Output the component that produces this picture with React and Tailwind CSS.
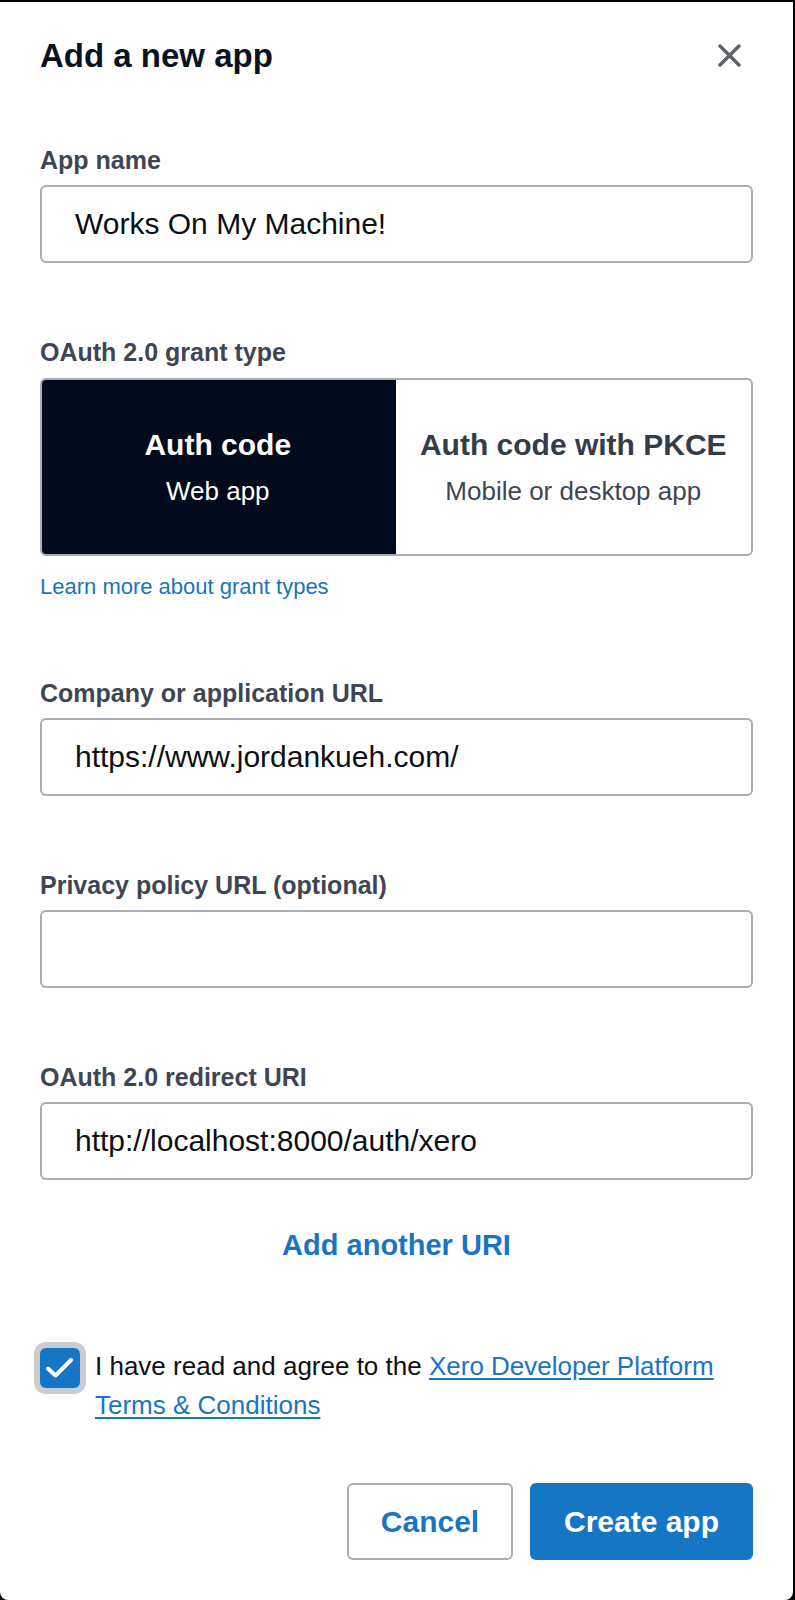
import React from 'react';

const fields = [
    { label: 'Company or application URL', value: 'https://www.jordankueh.com/' },
    { label: 'Privacy policy URL (optional)', value: '' },
    { label: 'OAuth 2.0 redirect URI', value: 'http://localhost:8000/auth/xero' },
];

function Field({ label, value, className = '' }) {
    return (
        <div className={className}>
            <label className="block text-[25px] leading-none font-bold text-[#3e4654]">{label}</label>
            <div className="mt-[12px] h-[78px] border-2 border-[#a9aeb5] rounded-[6px] flex items-center px-[33px] text-[30px] leading-none text-[#0d0f12]">
                {value}
            </div>
        </div>
    );
}

export default function App() {
    return (
        <div className="min-h-[1600px] bg-black pt-[2px] pr-[2px]">
            <div className="h-[1598px] bg-white rounded-b-[8px] px-[40px] pt-[37px] font-['Liberation_Sans',Arial,sans-serif]">

                {/* Header */}
                <div className="flex items-start justify-between">
                    <h2 className="text-[33px] leading-none font-bold text-[#0b1221]">Add a new app</h2>
                    <button className="mt-[5px] mr-[12px] text-[#59616d]" aria-label="Close">
                        <svg width="23" height="23" viewBox="0 0 23 23" fill="none" stroke="currentColor" strokeWidth="3.4" strokeLinecap="round">
                            <path d="M2 2L21 21M21 2L2 21" />
                        </svg>
                    </button>
                </div>

                <Field label="App name" value="Works On My Machine!" className="mt-[76px]" />

                {/* Grant type */}
                <div className="mt-[77px]">
                    <div className="text-[25px] leading-none font-bold text-[#3e4654]">OAuth 2.0 grant type</div>
                    <div className="mt-[13px] h-[178px] flex border-2 border-[#a9aeb5] rounded-[6px] overflow-hidden">
                        <div className="flex-1 bg-[#020b1c] flex flex-col items-center justify-center -m-[2px] mr-0 rounded-l-[6px]">
                            <div className="text-[30px] leading-none font-bold text-white">Auth code</div>
                            <div className="mt-[18px] text-[26px] leading-none text-white">Web app</div>
                        </div>
                        <div className="flex-1 flex flex-col items-center justify-center">
                            <div className="text-[30px] leading-none font-bold text-[#343c49]">Auth code with PKCE</div>
                            <div className="mt-[18px] text-[26px] leading-none text-[#3e4654]">Mobile or desktop app</div>
                        </div>
                    </div>
                    <a className="block mt-[20px] text-[22px] leading-none text-[#1a74c4]">Learn more about grant types</a>
                </div>

                <Field label={fields[0].label} value={fields[0].value} className="mt-[83px]" />
                <Field label={fields[1].label} value={fields[1].value} className="mt-[77px]" />
                <Field label={fields[2].label} value={fields[2].value} className="mt-[77px]" />

                <div className="mt-[51px] text-center text-[29px] leading-none font-bold text-[#1a74c4]">Add another URI</div>

                {/* Terms */}
                <div className="mt-[87px] flex items-start">
                    <div className="mt-[1px] shrink-0 w-[40px] h-[40px] rounded-[6px] bg-[#1676c6] ring-[6px] ring-[#c9ccd1] flex items-center justify-center">
                        <svg width="30" height="24" viewBox="0 0 30 24" fill="none" stroke="white" strokeWidth="4" strokeLinecap="round" strokeLinejoin="round">
                            <path d="M3 12.5L10.5 19.5L26 4" />
                        </svg>
                    </div>
                    <div className="ml-[15px] text-[26px] leading-[39px] text-[#0d0f12]">
                        <div>
                            I have read and agree to the{' '}
                            <a className="text-[#1a74c4] underline underline-offset-[3px]">Xero Developer Platform</a>
                        </div>
                        <a className="text-[#1a74c4] underline underline-offset-[3px]">Terms &amp; Conditions</a>
                    </div>
                </div>

                {/* Actions */}
                <div className="mt-[58px] flex justify-end gap-[17px]">
                    <button className="h-[77px] w-[166px] border-2 border-[#a9aeb5] rounded-[6px] text-[30px] font-bold text-[#1a74c4]">Cancel</button>
                    <button className="h-[77px] w-[223px] rounded-[6px] bg-[#1676c6] text-[30px] font-bold text-white">Create app</button>
                </div>
            </div>
        </div>
    );
}
